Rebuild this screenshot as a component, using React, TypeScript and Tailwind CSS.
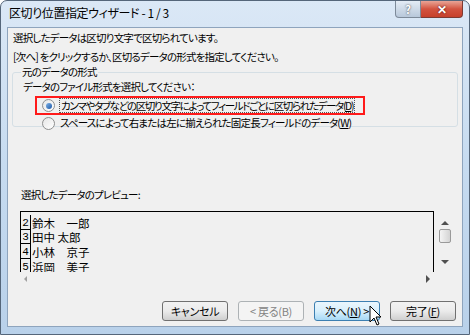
import React from "react";

const jp = "font-['Meiryo_UI','Noto_Sans_CJK_JP',sans-serif]";

function Radio({ checked }: { checked: boolean }) {
  return (
    <span className="relative flex h-[13px] w-[13px] shrink-0 items-center justify-center rounded-full border border-[#8e8f8f] bg-gradient-to-br from-[#e6e6e6] to-[#ffffff]">
      {checked && (
        <span className="h-[6px] w-[6px] rounded-full bg-gradient-to-br from-[#7fb2e6] to-[#1a57a6]" />
      )}
    </span>
  );
}

function Btn({ children, hover, disabled }: { children: React.ReactNode; hover?: boolean; disabled?: boolean }) {
  return (
    <div
      className={
        "flex h-[20px] w-[66px] items-center justify-center rounded-[3px] border text-[11px] tracking-[-0.3px] " +
        (hover
          ? "border-[#3c7fb1] bg-gradient-to-b from-[#eaf6fd] via-[#d9f0fc] to-[#a7d9f5] text-black"
          : disabled
          ? "border-[#adb2b5] bg-[#f4f4f4] text-[#838383]"
          : "border-[#707070] bg-gradient-to-b from-[#f2f2f2] via-[#ebebeb] to-[#cfcfcf] text-black")
      }
    >
      {children}
    </div>
  );
}

export default function App() {
  const rows = [
    ["2", "鈴木　一郎"],
    ["3", "田中 太郎"],
    ["4", "小林　京子"],
    ["5", "浜岡　美子"],
  ];
  return (
    <div className={"relative h-[335px] w-[470px] overflow-hidden " + jp}>
      <div className="flex h-full w-full flex-col rounded-t-[7px] border border-[#55667a] bg-gradient-to-b from-[#dbe8f6] via-[#c6dbf0] to-[#b9d1ea]">
        {/* title bar */}
        <div className="flex h-[26px] shrink-0 items-start justify-between">
          <div className="pl-[8px] pt-[5px] text-[12px] leading-[14px] tracking-[-0.4px] text-black [font-feature-settings:'palt']">
            区切り位置指定ウィザード - 1 / 3
          </div>
          <div className="mr-[6px] flex h-[17px]">
            <div className="flex h-[17px] w-[26px] items-center justify-center rounded-bl-[4px] border border-t-0 border-[#7d8a99] bg-gradient-to-b from-[#e4ecf5] to-[#b8c8da] text-[11px] font-bold text-white [text-shadow:0_0_2px_#333]">
              ?
            </div>
            <div className="flex h-[17px] w-[42px] items-center justify-center rounded-br-[4px] border border-l-0 border-t-0 border-[#7d3a32] bg-gradient-to-b from-[#e8a496] via-[#d2533f] to-[#c7402b] text-[12px] font-bold text-white [text-shadow:0_0_2px_#400]">
              ✕
            </div>
          </div>
        </div>
        {/* client */}
        <div className="mx-[6px] mb-[7px] flex flex-1 flex-col border border-[#8ea4bd] bg-[#f0f0f0] text-[10.5px] leading-[14px] tracking-[-0.8px] text-black [font-feature-settings:'palt']">
          <div className="pl-[5px] pt-[3px]">選択したデータは区切り文字で区切られています。</div>
          <div className="pl-[5px] pt-[5px]">[次へ] をクリックするか、区切るデータの形式を指定してください。</div>
          {/* group */}
          <div className="relative mx-[4px] mt-[8px] h-[55px] rounded-[3px] border border-[#d5dfe5] pl-[10px]">
            <div className="-mt-[8px] ml-[-2px] w-fit bg-[#f0f0f0] px-[1px]">元のデータの形式</div>
            <div className="mt-[1px]">データのファイル形式を選択してください：</div>
            <div className="ml-[12px] mt-[2px] flex h-[19px] w-[330px] items-center whitespace-nowrap border-2 border-[#ff1a1a] pl-[5px]">
              <Radio checked />
              <span className="ml-[4px] border border-dotted border-[#555] px-[1px] leading-[13px] tracking-[-1.35px]">
                カンマやタブなどの区切り文字によってフィールドごとに区切られたデータ(<u>D</u>)
              </span>
            </div>
            <div className="ml-[14px] flex h-[16px] items-center whitespace-nowrap pl-[5px]">
              <Radio checked={false} />
              <span className="ml-[5px]">スペースによって右または左に揃えられた固定長フィールドのデータ(<u>W</u>)</span>
            </div>
          </div>
          <div className="h-[61px]" />
          <div className="pl-[13px]">選択したデータのプレビュー:</div>
          {/* preview */}
          <div className="ml-[12px] mt-[9px] flex">
            <div className="flex h-[74px] w-[430px] flex-col">
              <div className="h-[61px] w-[414px] overflow-hidden border-l border-r border-t border-black bg-[#f0f0f0] pt-[3px]">
                {rows.map(([n, name]) => (
                  <div key={n} className="flex h-[14.7px] items-end">
                    <div className="flex h-full w-[10px] items-end justify-center border-b border-r border-black font-['Liberation_Mono',monospace] text-[11px] leading-[12px] tracking-normal">
                      {n}
                    </div>
                    <div className="whitespace-pre pl-[1px] font-['Noto_Sans_CJK_JP',sans-serif] text-[11.5px] leading-[13px] tracking-normal [font-feature-settings:normal]">
                      {name}
                    </div>
                  </div>
                ))}
              </div>
              <div className="flex h-[13px] w-[414px] items-center justify-between px-[4px]">
                <span className="h-0 w-0 border-y-[3px] border-r-[3px] border-y-transparent border-r-[#a0a0a0]" />
                <span className="h-0 w-0 border-y-[4px] border-l-[4px] border-y-transparent border-l-[#505050]" />
              </div>
            </div>
            <div className="-ml-[14px] mt-[7px] flex h-[56px] w-[17px] flex-col items-center">
              <span className="mt-[3px] h-0 w-0 border-x-[4px] border-b-[4px] border-x-transparent border-b-[#505050]" />
              <span className="mt-[4px] h-[14px] w-[12px] rounded-[2px] border border-[#9a9a9a] bg-gradient-to-r from-[#f4f4f4] to-[#d4d4d4]" />
              <span className="mt-[17px] h-0 w-0 border-x-[4px] border-t-[4px] border-x-transparent border-t-[#505050]" />
            </div>
          </div>
          <div className="flex-1" />
          <div className="mb-[5px] flex justify-end gap-[10px] pr-[6px]">
            <Btn>キャンセル</Btn>
            <Btn disabled>&lt; 戻る(B)</Btn>
            <Btn hover>
              次へ(<u>N</u>) &gt;
            </Btn>
            <Btn>
              完了(<u>F</u>)
            </Btn>
          </div>
        </div>
      </div>
      {/* cursor */}
      <svg className="absolute left-[369px] top-[305px]" width="14" height="22" viewBox="0 0 14 22">
        <path d="M1 1 L1 17 L5 13 L8 20 L10 19 L7 12 L12 12 Z" fill="#fff" stroke="#000" strokeWidth="1" strokeLinejoin="miter" />
      </svg>
    </div>
  );
}
